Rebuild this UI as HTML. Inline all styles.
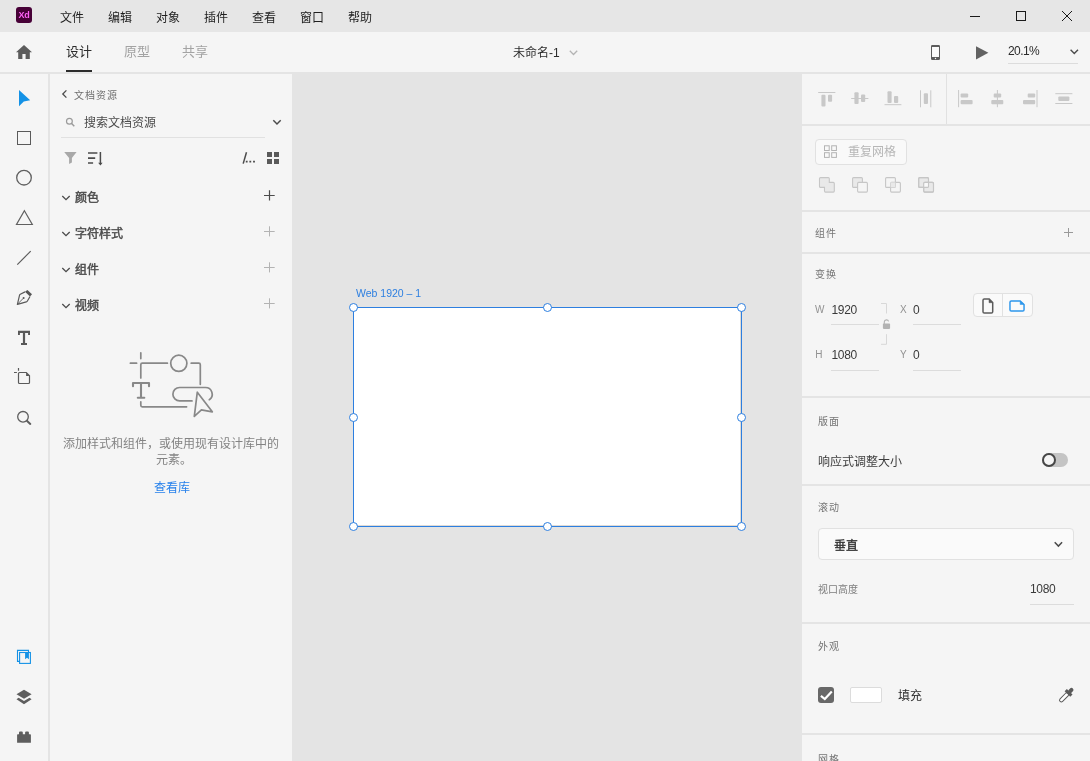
<!DOCTYPE html>
<html lang="zh-CN">
<head>
<meta charset="utf-8">
<title>未命名-1 - Adobe XD</title>
<style>
*{margin:0;padding:0;box-sizing:border-box}
html,body{width:1090px;height:761px;overflow:hidden}
body{position:relative;background:#e4e4e4;font-family:"Liberation Sans",sans-serif;font-size:12px;color:#2c2c2c}
div,span,a,svg,button{position:absolute}
svg{overflow:visible}
.t{white-space:nowrap;line-height:16px;height:16px}
.titlebar,.toolbar,.strip,.lpanel,.rpanel,.ablabel{will-change:transform}
.titlebar{left:0;top:0;width:1090px;height:32px;background:#e6e6e6}
.toolbar{left:0;top:32px;width:1090px;height:40px;background:#f5f5f5}
.strip{left:0;top:74px;width:48px;height:687px;background:#f5f5f5}
.lpanel{left:50px;top:74px;width:242px;height:687px;background:#f5f5f5}
.rpanel{left:802px;top:74px;width:288px;height:687px;background:#f5f5f5}
.menu{top:10px;color:#1f1f1f;font-size:12px}
.tab{top:12px;font-size:13px;color:#a3a3a3}
.tab.on{color:#2c2c2c}
.sep{left:0;width:288px;height:2px;background:#e4e4e4}
.lab{font-size:10px;letter-spacing:1px;color:#757575}
.sec{left:25px;font-size:12px;color:#4b4b4b;-webkit-text-stroke:0.45px #4b4b4b}
.num{font-size:12px;color:#3a3a3a;letter-spacing:-0.3px}
.ul{height:1px;background:#dcdcdc}
.k{font-size:10px;color:#929292}
.handle{width:9px;height:9px;border:1px solid #2d7fe0;border-radius:50%;background:#fff}
</style>
</head>
<body>

<!-- ===== title bar ===== -->
<div class="titlebar">
  <div style="left:16px;top:7px;width:16px;height:16px;border-radius:3px;background:#470137;color:#ff61f6;font-size:9px;font-weight:bold;line-height:16px;text-align:center;letter-spacing:-0.3px">Xd</div>
  <div class="t menu" style="left:60px">文件</div>
  <div class="t menu" style="left:108px">编辑</div>
  <div class="t menu" style="left:156px">对象</div>
  <div class="t menu" style="left:204px">插件</div>
  <div class="t menu" style="left:252px">查看</div>
  <div class="t menu" style="left:300px">窗口</div>
  <div class="t menu" style="left:348px">帮助</div>
  <svg style="left:960px;top:0" width="130" height="32" viewBox="960 0 130 32" fill="none" stroke="#1a1a1a" stroke-width="1">
    <path d="M970 16.5H980"/>
    <rect x="1016.5" y="11.5" width="9" height="9"/>
    <path d="M1062 11L1072 21M1072 11L1062 21"/>
  </svg>
</div>

<!-- ===== toolbar ===== -->
<div class="toolbar">
  <svg style="left:16px;top:13px" width="16" height="14" viewBox="0 0 16 14"><path d="M8 0L0 7.200H2.200V14H6.400V9H9.600V14H13.800V7.200H16Z" fill="#5c5c5c"/></svg>
  <div class="t tab on" style="left:66px">设计</div>
  <div style="left:66px;top:38px;width:26px;height:2px;background:#2c2c2c"></div>
  <div class="t tab" style="left:124px">原型</div>
  <div class="t tab" style="left:182px">共享</div>
  <div class="t" style="left:513px;top:13px;font-size:12px;color:#2c2c2c">未命名-1</div>
  <svg style="left:569px;top:18px" width="9" height="6" viewBox="0 0 9 6" fill="none" stroke="#b3b3b3" stroke-width="1.3"><path d="M0.8 0.8L4.5 4.5L8.2 0.8"/></svg>
  <svg style="left:931px;top:13px" width="9" height="15" viewBox="0 0 9 15"><path fill-rule="evenodd" d="M1.300 0h6.400A1.300 1.300 0 0 1 9 1.300v12.400A1.300 1.300 0 0 1 7.700 15h-6.400A1.300 1.300 0 0 1 0 13.700v-12.400A1.300 1.300 0 0 1 1.300 0ZM1.100 2v10h6.800V2ZM4.500 12.800a.7.700 0 1 0 0 1.400a.7.700 0 0 0 0-1.400Z" fill="#5c5c5c"/><rect x="1.100" y="2" width="6.800" height="10" fill="#fbfbfb"/></svg>
  <svg style="left:976px;top:13.500px" width="13" height="14" viewBox="0 0 13 14"><path d="M0 0.200L12.400 6.800L0 13.400Z" fill="#626262"/></svg>
  <div class="t" style="left:1008px;top:11px;font-size:12px;letter-spacing:-0.600px;color:#2c2c2c">20.1%</div>
  <div class="ul" style="left:1008px;top:31px;width:70px"></div>
  <svg style="left:1070px;top:17px" width="9" height="6" viewBox="0 0 9 6" fill="none" stroke="#4b4b4b" stroke-width="1.400"><path d="M0.600 0.800L4.300 4.500L8 0.800"/></svg>
</div>

<!-- ===== tool strip ===== -->
<div class="strip">
  <svg style="left:0;top:0" width="48" height="687" viewBox="0 74 48 687" fill="none" stroke="#5a5a5a" stroke-width="1">
    <path d="M19 90L30.200 100.200L23.800 101.500L19 106.300Z" fill="#1492e6" stroke="none"/>
    <rect x="17.500" y="131.500" width="13" height="13"/>
    <circle cx="24" cy="177.700" r="7.300" stroke="#606060" stroke-width="1.300"/>
    <path d="M24.400 210.700L32.300 224.500H16.500Z" stroke="#606060" stroke-width="1.200"/>
    <path d="M17.300 264.600L30.700 251.200" stroke-width="1.200"/>
    <!-- pen -->
    <g transform="translate(17,290)">
      <path d="M10.400 0L15 4.200L13 6.600L8 1.800Z" fill="#555" stroke="none"/>
      <path d="M8 1.900L3.300 4.300Q2.700 4.600 2.500 5.300L0.400 14.300L9.300 11.900Q10 11.700 10.400 11L13 6.500" stroke-width="1.200" stroke-linejoin="round"/>
      <path d="M0.500 14.200L6.200 8.400" stroke-width="0.900"/>
      <circle cx="6.600" cy="8" r="1" fill="#555" stroke="none"/>
    </g>
    <!-- text -->
    <path d="M18 330.800H30V334.900H28.100V332.900H25.100V343.100H27V345H21V343.100H22.900V332.900H19.900V334.900H18Z" fill="#585858" stroke="none"/>
    <!-- artboard -->
    <path d="M18.500 368.100V370.800M14 372.500H16.900" stroke-width="1.200"/>
    <path d="M19.500 372.500H26.300L29.500 375.700V382.500Q29.500 383.500 28.500 383.500H19.500Q18.500 383.500 18.500 382.500V373.500Q18.500 372.500 19.500 372.500Z" stroke-width="1.200"/>
    <path d="M26.100 372.600V376H29.500Z" fill="#555" stroke="none"/>
    <!-- zoom -->
    <circle cx="23" cy="416.800" r="5.300" stroke-width="1.300" stroke="#5e5e5e"/>
    <path d="M27.100 420.900L30.300 423.900" stroke-width="2" stroke-linecap="round" stroke="#5e5e5e"/>
    <!-- library -->
    <g stroke="#1492e6" stroke-width="1.100">
      <path d="M19.600 661.400H17.500V650.400H28.500V652.500"/>
      <rect x="19.600" y="652.500" width="10.800" height="10.900"/>
      <path d="M25.100 652.500V659.300L27 657.700L28.900 659.300V652.500Z" fill="#1492e6" stroke="none"/>
    </g>
    <!-- layers -->
    <path d="M24 689.800L31.600 694.300L24 698.800L16.500 694.300Z" fill="#5e5e5e" stroke="none"/>
    <path d="M18.600 697.800L24 700.900L29.500 697.800L31.600 699.200L24 704.200L16.500 699.200Z" fill="#5e5e5e" stroke="none"/>
    <!-- plugins -->
    <path d="M17.100 735Q17.100 734.300 17.800 734.300H19V732.400Q19 731.400 20 731.400H21.800Q22.800 731.400 22.800 732.400V734.300H25.100V732.400Q25.100 731.400 26.100 731.400H27.900Q28.900 731.400 28.900 732.400V734.300H30.200Q30.900 734.300 30.900 735V742.800H17.100Z" fill="#5e5e5e" stroke="none"/>
  </svg>
</div>

<!-- ===== left panel (document assets) ===== -->
<div class="lpanel">
  <svg style="left:0;top:0" width="242" height="687" viewBox="50 74 242 687" fill="none" stroke="#4b4b4b" stroke-width="1">
    <path d="M66.400 90.400L62.800 94L66.400 97.600" stroke-width="1.300"/>
    <!-- search glass -->
    <circle cx="69.400" cy="121.300" r="2.900" stroke="#9a9a9a" stroke-width="1.200"/>
    <path d="M71.600 123.500L74.300 126.300" stroke="#9a9a9a" stroke-width="1.400"/>
    <path d="M273.300 120.300L277 124L280.700 120.300" stroke-width="1.500"/>
    <!-- filter -->
    <path d="M64.200 152.100H76.600L71.900 158V162.400L69.100 163.900V158Z" fill="#a8a8a8" stroke="none"/>
    <!-- sort -->
    <path d="M88 153H97.400M88 158.100H95.200M88 163H93.100" stroke-width="1.700"/>
    <path d="M100.400 152V163.500" stroke-width="1.500"/><path d="M98.200 162.700H102.600L100.400 165.400Z" fill="#4b4b4b" stroke="none"/>
    <!-- path dots -->
    <path d="M246.500 152.300L243.200 163.600" stroke-width="1.500"/>
    <path d="M245.800 161.700H247.600M249.400 161.700H251.200M253.100 161.700H254.900" stroke-width="1.800"/>
    <!-- grid view -->
    <g fill="#5a5a5a" stroke="none"><rect x="267" y="152" width="5" height="5"/><rect x="274" y="152" width="5" height="5"/><rect x="267" y="159" width="5" height="5"/><rect x="274" y="159" width="5" height="5"/></g>
    <!-- row chevrons -->
    <g stroke-width="1.300"><path d="M62.300 196L66 199.700L69.700 196"/><path d="M62.300 232L66 235.700L69.700 232"/><path d="M62.300 268L66 271.700L69.700 268"/><path d="M62.300 304L66 307.700L69.700 304"/></g>
    <!-- plus -->
    <path d="M264 195.500H274.700M269.500 190.300V200.400" stroke-width="1.200"/>
    <g stroke="#b3b3b3"><path d="M264 231.500H274.700M269.500 226.300V236.400"/><path d="M264 267.500H274.700M269.500 262.300V272.400"/><path d="M264 303.500H274.700M269.500 298.300V308.400"/></g>
    <!-- empty-state illustration -->
    <g stroke="#888" stroke-width="1.700" stroke-linecap="round" stroke-linejoin="round">
      <path d="M140.800 352.800V358.600M130.400 363.200H136.600"/>
      <path d="M167.400 363.200H142.300Q140.800 363.200 140.800 364.700V378"/>
      <circle cx="178.800" cy="363.300" r="8.100"/>
      <path d="M191.200 363.200H198.800Q200.300 363.200 200.300 364.700V384.300"/>
      <path d="M140.800 401.800V405.300Q140.800 406.800 142.300 406.800H186.600"/>
      <path d="M133 386.300V383H149V386.300M141 383V397.700M137.800 397.700H144.300" stroke-width="2.100"/>
      <path d="M192 400.900H179.600A6.700 6.700 0 0 1 179.600 387.500H205.500A6.700 6.700 0 0 1 209.300 399.700"/>
      <path d="M197.300 392.200L194.300 416.300L201.400 409.900L212.300 411.800Z" fill="#f5f5f5"/>
    </g>
  </svg>
  <div class="t lab" style="left:24px;top:13.600px;color:#6e6e6e">文档资源</div>
  <div class="t" style="left:34px;top:41px;color:#4b4b4b">搜索文档资源</div>
  <div class="ul" style="left:11px;top:63px;width:204px;background:#e1e1e1"></div>
  <div class="t sec" style="top:116px">颜色</div>
  <div class="t sec" style="top:152px">字符样式</div>
  <div class="t sec" style="top:188px">组件</div>
  <div class="t sec" style="top:224px">视频</div>
  <div style="left:10px;top:362px;width:222px;text-align:center;font-size:12px;line-height:16px;color:#838383">添加样式和组件，或使用现有设计库中的<br><span style="position:relative;left:2.500px">元素。</span></div>
  <a class="t" style="left:104px;top:405.600px;color:#2680eb">查看库</a>
</div>

<!-- ===== canvas / artboard ===== -->
<div class="t ablabel" style="left:356px;top:285px;font-size:10.500px;color:#2d7fe0">Web 1920 – 1</div>
<div style="left:353px;top:307px;width:389px;height:220px;border:1px solid #2d7fe0;background:#fff;box-shadow:inset -1px -1px 0 rgba(110,90,70,.22)"></div>
<div class="handle" style="left:349px;top:303px"></div>
<div class="handle" style="left:543px;top:303px"></div>
<div class="handle" style="left:737px;top:303px"></div>
<div class="handle" style="left:349px;top:412.500px"></div>
<div class="handle" style="left:737px;top:412.500px"></div>
<div class="handle" style="left:349px;top:522px"></div>
<div class="handle" style="left:543px;top:522px"></div>
<div class="handle" style="left:737px;top:522px"></div>

<!-- ===== right panel (property inspector) ===== -->
<div class="rpanel">
  <svg style="left:0;top:0;z-index:2" width="288" height="687" viewBox="802 74 288 687" fill="none" stroke="#c8c8c8" stroke-width="1">
    <!-- align -->
    <g fill="#c8c8c8">
      <path d="M818.200 92.500H835.400" /><rect x="821.400" y="94.700" width="4.100" height="11.800" rx="1" stroke="none"/><rect x="828" y="94.700" width="4.100" height="7.100" rx="1" stroke="none"/>
      <path d="M851.200 98.500H868.400"/><rect x="854.400" y="92.200" width="4.200" height="11.800" rx="1" stroke="none"/><rect x="861" y="94.500" width="4.200" height="7.400" rx="1" stroke="none"/>
      <path d="M884.500 104.700H901.400"/><rect x="887.500" y="91.200" width="4.100" height="11.700" rx="1" stroke="none"/><rect x="894" y="95.900" width="4.200" height="7" rx="1" stroke="none"/>
      <path d="M920.500 90.300V107.300M930.800 90.300V107.300"/><rect x="923.800" y="93.200" width="4.200" height="10.800" rx="1" stroke="none"/>
      <path d="M958.600 90V107.200"/><rect x="960.600" y="93.500" width="7.600" height="4.100" rx="1" stroke="none"/><rect x="960.600" y="99.900" width="12" height="4.300" rx="1" stroke="none"/>
      <path d="M997.400 90V107.200"/><rect x="993.700" y="93.500" width="7.500" height="4.100" rx="1" stroke="none"/><rect x="991.300" y="99.900" width="12" height="4.300" rx="1" stroke="none"/>
      <path d="M1037 90V107.200"/><rect x="1027.700" y="93.500" width="7.500" height="4.100" rx="1" stroke="none"/><rect x="1023" y="99.900" width="12.200" height="4.300" rx="1" stroke="none"/>
      <path d="M1055.300 93.700H1072.400M1055.300 103.500H1072.400"/><rect x="1058.300" y="96.500" width="11.100" height="4.400" rx="1" stroke="none"/>
    </g>
    <path d="M946.500 74V124" stroke="#e1e1e1"/>
    <!-- repeat grid glyph -->
    <g stroke="#b3b3b3"><rect x="824.500" y="145.800" width="4.700" height="4.700" /><rect x="831.700" y="145.800" width="4.700" height="4.700"/><rect x="824.500" y="152.700" width="4.700" height="4.700"/><rect x="831.700" y="152.700" width="4.700" height="4.700"/></g>
    <!-- boolean ops -->
    <g stroke="#c6c6c6" stroke-width="1.100" fill="#e9e9e9">
      <path d="M820.500 177.600H828.300Q829.300 177.600 829.300 178.600V182.400H833.300Q834.300 182.400 834.300 183.400V191.100Q834.300 192.100 833.300 192.100H825.500Q824.500 192.100 824.500 191.100V187.400H820.500Q819.500 187.400 819.500 186.400V178.600Q819.500 177.600 820.500 177.600Z"/>
      <rect x="852.600" y="177.600" width="9.800" height="9.800" rx="1"/><rect x="857.600" y="182.400" width="9.800" height="9.700" rx="1" fill="#f5f5f5"/>
      <rect x="885.600" y="177.600" width="9.800" height="9.800" rx="1" fill="none"/><rect x="890.600" y="182.400" width="9.800" height="9.700" rx="1" fill="none"/><rect x="890.600" y="182.400" width="4.800" height="5" stroke="none"/>
      <rect x="918.700" y="177.600" width="9.800" height="9.800" rx="1"/><rect x="923.700" y="182.400" width="9.800" height="9.700" rx="1"/><rect x="923.700" y="182.400" width="4.800" height="5" fill="#f9f9f9" stroke="none"/><rect x="918.700" y="177.600" width="9.800" height="9.800" rx="1" fill="none"/><rect x="923.700" y="182.400" width="9.800" height="9.700" rx="1" fill="none"/>
    </g>
    <path d="M1064 232.500H1073M1068.500 228V237" stroke="#999"/>
    <!-- lock bracket -->
    <path d="M881 303.500H886.500V313.500M886.500 334.200V344.300H881" stroke="#d8d8d8"/>
    <path d="M884.300 324V321.900A2.200 2.200 0 0 1 888.600 321.400" stroke="#b3b3b3" stroke-width="1.100"/>
    <rect x="882.900" y="323.600" width="7.200" height="5.300" rx=".8" fill="#b3b3b3" stroke="none"/>
    <!-- dropdown chevron -->
    <path d="M1054.700 542.200L1058.400 546.100L1062.100 542.200" stroke="#4b4b4b" stroke-width="1.500"/>
    <!-- eyedropper -->
    <g transform="rotate(45 1066.300 695.100)">
      <rect x="1064.500" y="692.500" width="3.600" height="11.400" rx="1.800" fill="#fff" stroke="#5a5a5a" stroke-width="1"/>
      <rect x="1062.300" y="690.300" width="8" height="3.200" fill="#5a5a5a" stroke="none"/>
      <rect x="1064.300" y="685.800" width="4" height="6" rx="2" fill="#5a5a5a" stroke="none"/>
    </g>
  </svg>

  <div class="sep" style="top:50px"></div>
  <div style="left:13px;top:65px;width:92px;height:26px;border:1px solid #e1e1e1;border-radius:4px;background:#f9f9f9"></div>
  <div class="t" style="left:46px;top:69.500px;color:#b6b6b6">重复网格</div>
  <div class="sep" style="top:136px"></div>

  <div class="t lab" style="left:13px;top:152px">组件</div>
  <div class="sep" style="top:178px"></div>

  <div class="t lab" style="left:13px;top:192.500px">变换</div>
  <div class="t k" style="left:13px;top:227.500px">W</div>
  <div class="t num" style="left:29.400px;top:227.600px">1920</div>
  <div class="ul" style="left:29px;top:250px;width:48px"></div>
  <div class="t k" style="left:98px;top:227.500px">X</div>
  <div class="t num" style="left:111px;top:227.600px">0</div>
  <div class="ul" style="left:111px;top:250px;width:48px"></div>
  <div class="t k" style="left:13.300px;top:272.500px">H</div>
  <div class="t num" style="left:29.400px;top:272.500px">1080</div>
  <div class="ul" style="left:29px;top:296px;width:48px"></div>
  <div class="t k" style="left:98px;top:272.500px">Y</div>
  <div class="t num" style="left:111px;top:272.500px">0</div>
  <div class="ul" style="left:111px;top:296px;width:48px"></div>
  <div style="left:171px;top:219px;width:60px;height:24px;border:1px solid #e1e1e1;border-radius:4px;background:#fafafa">
    <div style="left:28px;top:0;width:1px;height:22px;background:#e1e1e1"></div>
    <svg style="left:8px;top:3.500px" width="12" height="16" viewBox="0 0 12 16" fill="none" stroke="#5c5c5c" stroke-width="1.500"><path d="M2.300 1H7.200L10.700 4.500V13.700Q10.700 15 9.400 15H2.300Q1 15 1 13.700V2.300Q1 1 2.300 1Z"/><path d="M7 1V4.700H10.700Z" fill="#5c5c5c" stroke-width="0.500"/></svg>
    <svg style="left:35px;top:5.500px" width="16.500" height="12" viewBox="0 0 17 12" preserveAspectRatio="none" fill="none" stroke="#2d96eb" stroke-width="1.500"><path d="M2.300 1H11.500L15.500 4.500V9.700Q15.500 11 14.200 11H2.300Q1 11 1 9.700V2.300Q1 1 2.300 1Z"/><path d="M11.500 1V4.500H15.500Z" fill="#2d96eb" stroke-width="0.500"/></svg>
  </div>
  <div class="sep" style="top:322px"></div>

  <div class="t lab" style="left:16px;top:339.500px">版面</div>
  <div class="t" style="left:16px;top:380px;color:#3c3c3c">响应式调整大小</div>
  <div style="left:240px;top:379px;width:26px;height:14px;border-radius:7px;background:#c4c4c4">
    <div style="left:0;top:0;width:14px;height:14px;border-radius:50%;border:2px solid #464646;background:#f5f5f5"></div>
  </div>
  <div class="sep" style="top:410px"></div>

  <div class="t lab" style="left:16px;top:425.500px">滚动</div>
  <div style="left:16px;top:454px;width:256px;height:32px;border:1px solid #e1e1e1;border-radius:4px;background:#fafafa"></div>
  <div class="t" style="left:32px;top:464px;font-size:12px;color:#2c2c2c;-webkit-text-stroke:0.300px #2c2c2c">垂直</div>
  <div class="t" style="left:16px;top:507.500px;font-size:10px;color:#7d7d7d">视口高度</div>
  <div class="t num" style="left:228px;top:507.300px">1080</div>
  <div class="ul" style="left:228px;top:530px;width:44px"></div>
  <div class="sep" style="top:548px"></div>

  <div class="t lab" style="left:16px;top:565px">外观</div>
  <div style="left:16px;top:613px;width:16px;height:16px;border-radius:3px;background:#686868">
    <svg style="left:0;top:0" width="16" height="16" viewBox="0 0 16 16" fill="none" stroke="#fff" stroke-width="2.200"><path d="M2.900 8.800L6.800 12L13.800 4.500"/></svg>
  </div>
  <div style="left:48px;top:613px;width:32px;height:16px;border:1px solid #dcdcdc;border-radius:2px;background:#fff"></div>
  <div class="t" style="left:96.400px;top:614px;color:#2c2c2c">填充</div>
  <div class="sep" style="top:659px"></div>

  <div class="t lab" style="left:16px;top:678px">网格</div>
</div>

</body>
</html>
